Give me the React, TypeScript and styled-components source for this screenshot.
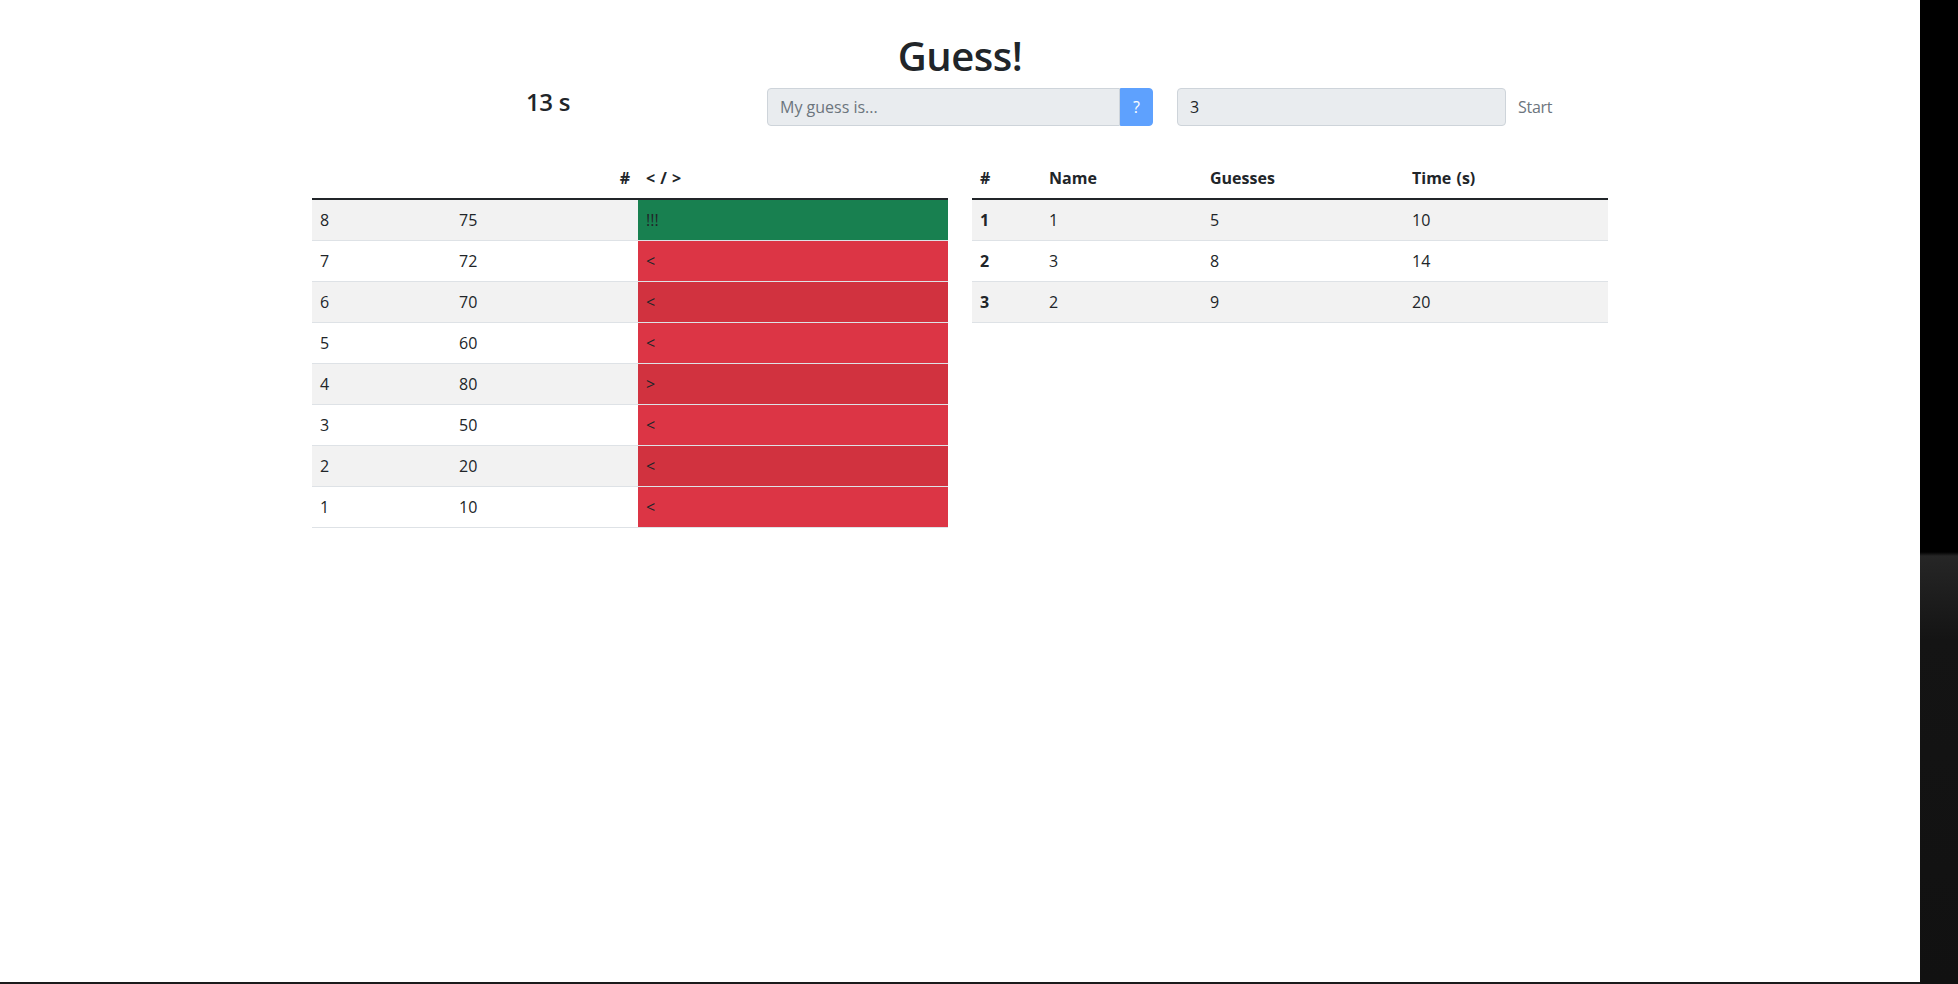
import React from 'react';
import styled, { createGlobalStyle } from 'styled-components';

const GlobalStyle = createGlobalStyle`
  body {
    margin: 0;
    font-family: 'Open Sans', 'Noto Sans', sans-serif;
    color: #212529;
    background: #111;
  }
  * {
    box-sizing: border-box;
  }
`;

const Screen = styled.div`
  display: flex;
  min-height: 984px;
`;

const Main = styled.main`
  width: 1920px;
  height: 984px;
  background: #fff;
  border-bottom: 2px solid #1b1b1b;
`;

const SideStrip = styled.div`
  flex: 1;
  background: linear-gradient(#000 0, #000 552px, #262626 556px, #141414 640px, #111 100%);
`;

const Container = styled.div`
  width: 1320px;
  margin: 0 auto;
  padding: 0 12px;
`;

const Title = styled.h1`
  margin: 32px 0 8px;
  font-size: 40px;
  font-weight: 600;
  line-height: 1.2;
  text-align: center;
  letter-spacing: -0.5px;
`;

const HeaderRow = styled.div`
  display: flex;
  align-items: flex-start;
  height: 38px;
`;

const TimerCol = styled.div`
  width: 443px;
  padding-left: 29px;
  text-align: center;
`;

const Timer = styled.h4`
  margin: 0;
  font-size: 24px;
  font-weight: 600;
  line-height: 1.2;
  letter-spacing: -0.3px;
`;

const GuessCol = styled.div`
  width: 410px;
  padding: 0 12px;
`;

const NameCol = styled.div`
  display: flex;
  width: 410px;
  padding-left: 12px;
`;

const InputGroup = styled.div`
  display: flex;
  width: 100%;
`;

const Field = styled.input<{ $joined?: boolean; $width?: number }>`
  flex: ${(p) => (p.$width ? `0 0 ${p.$width}px` : '1')};
  min-width: 0;
  height: 38px;
  padding: 6px 12px;
  font: inherit;
  font-size: 16px;
  line-height: 1.5;
  color: #212529;
  background: #e9ecef;
  border: 1px solid #ced4da;
  border-radius: ${(p) => (p.$joined ? '4px 0 0 4px' : '4px')};
  &::placeholder {
    color: #6c757d;
  }
`;

const AskButton = styled.button`
  height: 38px;
  padding: 6px 12px;
  font: inherit;
  font-size: 16px;
  line-height: 1.5;
  color: #fff;
  background: #5ea1fe;
  border: 1px solid #5ea1fe;
  border-radius: 0 4px 4px 0;
`;

const StartButton = styled.button`
  flex: none;
  height: 38px;
  padding: 6px 12px;
  font: inherit;
  font-size: 16px;
  line-height: 1.5;
  letter-spacing: -0.3px;
  color: #6c757d;
  background: none;
  border: none;
`;

const TablesRow = styled.div`
  display: flex;
  align-items: flex-start;
  gap: 24px;
  margin-top: 32px;
`;

const Table = styled.table`
  width: 636px;
  border-collapse: collapse;
  table-layout: fixed;
  font-size: 16px;
  line-height: 1.5;
`;

const HeadCell = styled.th<{ $align?: string }>`
  padding: 8px;
  font-weight: 700;
  text-align: ${(p) => p.$align || 'left'};
  border-bottom: 2px solid #212529;
  word-spacing: 1px;
`;

const BodyRow = styled.tr<{ $striped: boolean }>`
  background: ${(p) => (p.$striped ? '#f2f2f2' : '#fff')};
`;

const Cell = styled.td<{ $bold?: boolean }>`
  padding: 8px;
  font-weight: ${(p) => (p.$bold ? 700 : 400)};
  border-bottom: 1px solid #dee2e6;
`;

const toneColors = {
  hit: ['#198754', '#188050'],
  miss: ['#dc3545', '#d1323f'],
};

const HintCell = styled.td<{ $tone: 'hit' | 'miss'; $striped: boolean }>`
  padding: 8px;
  background: ${(p) => toneColors[p.$tone][p.$striped ? 1 : 0]};
  border-bottom: 1px solid #dee2e6;
`;

const guesses = [
  { n: 8, value: 75, hint: '!!!' },
  { n: 7, value: 72, hint: '<' },
  { n: 6, value: 70, hint: '<' },
  { n: 5, value: 60, hint: '<' },
  { n: 4, value: 80, hint: '>' },
  { n: 3, value: 50, hint: '<' },
  { n: 2, value: 20, hint: '<' },
  { n: 1, value: 10, hint: '<' },
];

const scores = [
  { rank: 1, name: '1', guesses: 5, time: 10 },
  { rank: 2, name: '3', guesses: 8, time: 14 },
  { rank: 3, name: '2', guesses: 9, time: 20 },
];

function App() {
  return (
    <>
      <GlobalStyle />
      <Screen>
        <Main>
          <Container>
            <Title>Guess!</Title>
            <HeaderRow>
              <TimerCol>
                <Timer>13 s</Timer>
              </TimerCol>
              <GuessCol>
                <InputGroup>
                  <Field $joined placeholder="My guess is..." disabled />
                  <AskButton disabled>?</AskButton>
                </InputGroup>
              </GuessCol>
              <NameCol>
                <Field $width={329} defaultValue="3" disabled />
                <StartButton disabled>Start</StartButton>
              </NameCol>
            </HeaderRow>

            <TablesRow>
              <Table>
                <colgroup>
                  <col style={{ width: 139 }} />
                  <col style={{ width: 187 }} />
                  <col style={{ width: 310 }} />
                </colgroup>
                <thead>
                  <tr>
                    <HeadCell />
                    <HeadCell $align="right">#</HeadCell>
                    <HeadCell>&lt; / &gt;</HeadCell>
                  </tr>
                </thead>
                <tbody>
                  {guesses.map((g, i) => (
                    <BodyRow key={g.n} $striped={i % 2 === 0}>
                      <Cell>{g.n}</Cell>
                      <Cell>{g.value}</Cell>
                      <HintCell
                        $tone={g.hint === '!!!' ? 'hit' : 'miss'}
                        $striped={i % 2 === 0}
                      >
                        {g.hint}
                      </HintCell>
                    </BodyRow>
                  ))}
                </tbody>
              </Table>

              <Table>
                <colgroup>
                  <col style={{ width: 69 }} />
                  <col style={{ width: 161 }} />
                  <col style={{ width: 202 }} />
                  <col style={{ width: 204 }} />
                </colgroup>
                <thead>
                  <tr>
                    <HeadCell>#</HeadCell>
                    <HeadCell>Name</HeadCell>
                    <HeadCell>Guesses</HeadCell>
                    <HeadCell>Time (s)</HeadCell>
                  </tr>
                </thead>
                <tbody>
                  {scores.map((s, i) => (
                    <BodyRow key={s.rank} $striped={i % 2 === 0}>
                      <Cell $bold>{s.rank}</Cell>
                      <Cell>{s.name}</Cell>
                      <Cell>{s.guesses}</Cell>
                      <Cell>{s.time}</Cell>
                    </BodyRow>
                  ))}
                </tbody>
              </Table>
            </TablesRow>
          </Container>
        </Main>
        <SideStrip />
      </Screen>
    </>
  );
}

export default App;
